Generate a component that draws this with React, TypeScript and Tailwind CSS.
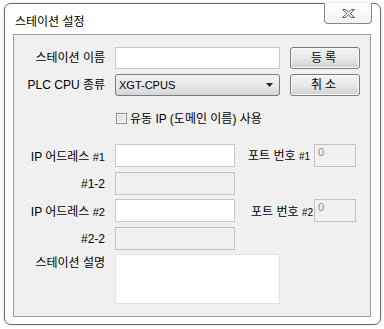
const font = { fontFamily: '"Liberation Sans", "Noto Sans CJK KR", sans-serif' }

const Label: React.FC<{ children: React.ReactNode; className?: string }> = ({ children, className }) => (
  <div className={"w-[91px] shrink-0 text-right text-[12px] leading-none text-black " + (className ?? "")}>{children}</div>
)

const TextBox: React.FC<{ w: string; disabled?: boolean; value?: string }> = ({ w, disabled, value }) => (
  <div
    className={
      "h-full shrink-0 border px-[3px] pt-[2px] text-[11px] leading-none " +
      w +
      (disabled ? " border-[#c3c3c3] bg-[#f0f0f0] text-[#8a8a8a]" : " border-[#c9c9c9] bg-white")
    }
  >
    {value}
  </div>
)

const Button: React.FC<{ children: React.ReactNode }> = ({ children }) => (
  <div className="ml-[10px] flex h-full w-[70px] items-center justify-center rounded-[3px] border border-[#7a7a7a] bg-gradient-to-b from-[#f4f4f4] via-[#e8e8e8] to-[#d0d0d0] text-[12px] tracking-[3px] text-black shadow-[inset_0_0_0_1px_#fbfbfb]">
    {children}
  </div>
)

export default function App() {
  return (
    <div className="h-[329px] w-[384px] bg-white pl-[4px] pt-[3px]" style={font}>
      <div className="relative h-[322px] w-[377px] rounded-[7px] border border-[#6b6b6b] bg-white shadow-[0_0_3px_rgba(0,0,0,0.15)]">
        <div className="absolute left-[10px] top-[12px] text-[12px] leading-none text-black">스테이션 설정</div>
        <div className="absolute right-[8px] top-[-1px] flex h-[21px] w-[48px] items-center justify-center rounded-b-[4px] border border-t-0 border-[#8a8a8a] bg-gradient-to-b from-white to-[#f2f2f2]">
          <svg width="15" height="11" viewBox="0 0 15 11">
            <path
              d="M1.5 1.5h3l3 2.6 3-2.6h3l-4.3 4 4.3 4h-3l-3-2.6-3 2.6h-3l4.3-4z"
              fill="#f4f4f4"
              stroke="#5c5c5c"
              strokeWidth="1"
              strokeLinejoin="round"
            />
          </svg>
        </div>

        <div className="ml-[8px] mt-[30px] flex h-[283px] w-[358px] flex-col border border-[#9a9a9a] bg-[#f0f0f0]">
          <div className="mt-[12px] flex h-[22px] items-center">
            <Label>스테이션 이름</Label>
            <div className="ml-[10px] h-full">
              <TextBox w="w-[165px]" />
            </div>
            <Button>등록</Button>
          </div>

          <div className="mt-[5px] flex h-[22px] items-center">
            <Label className="text-[10.5px]">PLC CPU 종류</Label>
            <div className="ml-[10px] flex h-full w-[165px] items-center justify-between rounded-[3px] border border-[#7a7a7a] bg-gradient-to-b from-[#f4f4f4] via-[#e9e9e9] to-[#d6d6d6] pl-[3px] pr-[6px] text-[11px] text-black">
              <span>XGT-CPUS</span>
              <svg width="7" height="4" viewBox="0 0 7 4">
                <path d="M0 0h7L3.5 4z" fill="#222" />
              </svg>
            </div>
            <Button>취소</Button>
          </div>

          <div className="ml-[102px] mt-[16px] flex h-[13px] items-center">
            <div className="h-[11px] w-[11px] border border-[#8e8f8f] bg-gradient-to-br from-[#d8d8d8] to-[#f6f6f6] shadow-[inset_0_0_0_1px_#f4f4f4]" />
            <span className="ml-[3px] text-[12px] leading-none text-black">유동 IP (도메인 이름) 사용</span>
          </div>

          <div className="mt-[19px] flex h-[23px] items-center">
            <Label className="pt-[3px]">
              IP 어드레스 <span className="text-[11px]">#1</span>
            </Label>
            <div className="ml-[10px] h-full">
              <TextBox w="w-[120px]" />
            </div>
            <div className="w-[79px] shrink-0 pr-[4px] text-right text-[12px] leading-none text-black">
              포트 번호 <span className="text-[10px]">#1</span>
            </div>
            <div className="h-full">
              <TextBox w="w-[42px]" disabled value="0" />
            </div>
          </div>

          <div className="mt-[5px] flex h-[23px] items-center">
            <Label className="text-[11px]">#1-2</Label>
            <div className="ml-[10px] h-full">
              <TextBox w="w-[120px]" disabled />
            </div>
          </div>

          <div className="mt-[4px] flex h-[23px] items-center">
            <Label className="pt-[2px]">
              IP 어드레스 <span className="text-[11px]">#2</span>
            </Label>
            <div className="ml-[10px] h-full">
              <TextBox w="w-[120px]" />
            </div>
            <div className="w-[79px] shrink-0 pr-[1px] pt-[2px] text-right text-[12px] leading-none text-black">
              포트 번호 <span className="text-[10px]">#2</span>
            </div>
            <div className="h-full">
              <TextBox w="w-[42px]" disabled value="0" />
            </div>
          </div>

          <div className="mt-[5px] flex h-[23px] items-center">
            <Label className="text-[11px]">#2-2</Label>
            <div className="ml-[10px] h-full">
              <TextBox w="w-[120px]" disabled />
            </div>
          </div>

          <div className="mt-[4px] flex h-[50px] items-start">
            <Label className="pt-[3px]">스테이션 설명</Label>
            <div className="ml-[10px] h-full w-[165px] border border-[#e2e2e2] bg-white" />
          </div>
        </div>
      </div>
    </div>
  )
}
